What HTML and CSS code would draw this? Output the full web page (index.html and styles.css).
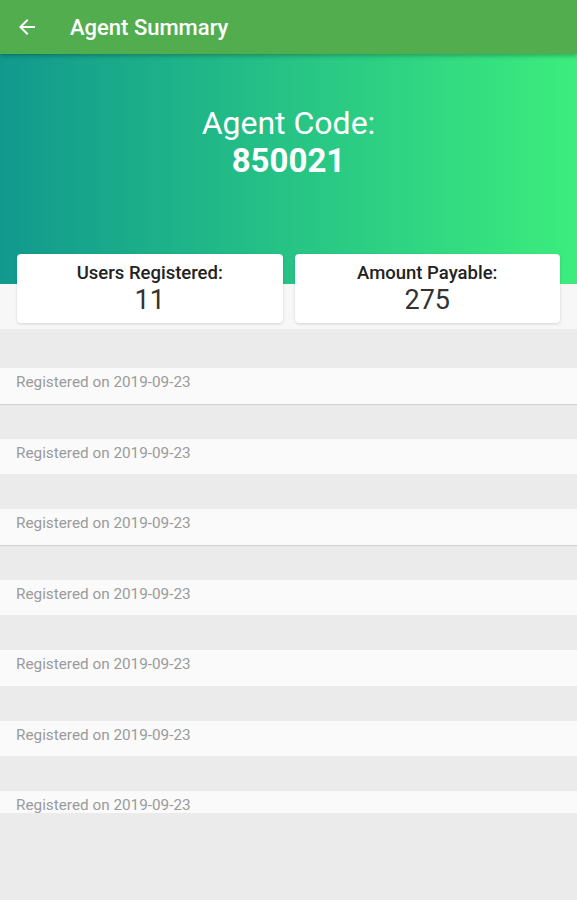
FILE: index.html
```html
<!DOCTYPE html>
<html lang="en">
<head>
    <meta charset="UTF-8">
    <title>Agent Summary</title>
    <meta name="viewport" content="width=device-width, initial-scale=1">
    <link rel="stylesheet" href="styles.css">
</head>
<body>
<header class="app-bar">
    <svg class="back-icon" viewBox="0 0 24 24" width="24" height="24">
        <path d="M20 11H7.83l5.59-5.59L12 4l-8 8 8 8 1.41-1.41L7.83 13H20v-2z" fill="#fff"/>
    </svg>
    <h1>Agent Summary</h1>
</header>

<section class="hero">
    <div class="code-label">Agent Code:</div>
    <div class="code-value">850021</div>
</section>

<section class="stats">
    <div class="stat-card">
        <div class="stat-title">Users Registered:</div>
        <div class="stat-value">11</div>
    </div>
    <div class="stat-card">
        <div class="stat-title">Amount Payable:</div>
        <div class="stat-value">275</div>
    </div>
</section>

<!-- registered users list -->
<div class="user-list">
    <div class="user-item"><div class="user-name"></div><div class="user-date">Registered on 2019-09-23</div></div>
    <div class="user-item"><div class="user-name"></div><div class="user-date">Registered on 2019-09-23</div></div>
    <div class="user-item"><div class="user-name"></div><div class="user-date">Registered on 2019-09-23</div></div>
    <div class="user-item"><div class="user-name"></div><div class="user-date">Registered on 2019-09-23</div></div>
    <div class="user-item"><div class="user-name"></div><div class="user-date">Registered on 2019-09-23</div></div>
    <div class="user-item"><div class="user-name"></div><div class="user-date">Registered on 2019-09-23</div></div>
    <div class="user-item"><div class="user-name"></div><div class="user-date">Registered on 2019-09-23</div></div>
</div>
</body>
</html>
```

FILE: styles.css
```css
body {
    margin: 0;
    font-family: Roboto, "Noto Sans", sans-serif;
    background: #ebebeb;
    min-height: 900px;
}

.app-bar {
    position: relative;
    z-index: 2;
    display: flex;
    align-items: center;
    height: 54px;
    padding: 0 15px;
    background: #52ad4f;
    box-shadow: 0 2px 4px rgba(0,0,0,0.25);
}
.back-icon {
    flex: none;
}
.app-bar h1 {
    margin: 0 0 0 31px;
    color: #fff;
    font-size: 22px;
    font-weight: 500;
}

.hero {
    height: 230px;
    padding-top: 50px;
    box-sizing: border-box;
    background: linear-gradient(to right, #11998e, #3ced7d);
    color: #fff;
    text-align: center;
}
.code-label {
    font-size: 32px;
    line-height: 38px;
}
.code-value {
    font-size: 33px;
    font-weight: 700;
    line-height: 38px;
}

.stats {
    display: grid;
    grid-template-columns: 1fr 1fr;
    gap: 12px;
    margin-top: -30px;
    padding: 0 17px 6px;
    background: linear-gradient(to bottom, transparent 30px, #f7f7f7 30px);
}
.stat-card {
    height: 69px;
    padding-top: 8px;
    box-sizing: border-box;
    background: #fff;
    border-radius: 4px;
    box-shadow: 0 1px 3px rgba(0,0,0,0.15);
    text-align: center;
}
.stat-title {
    font-size: 18.5px;
    font-weight: 500;
    color: #222;
    line-height: 22px;
}
.stat-value {
    font-size: 27px;
    color: #333;
    line-height: 33px;
}

.user-list {
    padding-top: 4px;
}
.user-item {
    height: 70.5px;
}
.user-name {
    height: 35px;
}
.user-date {
    height: 35.5px;
    padding: 5px 16px 0;
    box-sizing: border-box;
    background: #fafafa;
    color: #9a9a9a;
    font-size: 15.3px;
}
.user-item:nth-child(1) .user-date, .user-item:nth-child(3) .user-date {
    box-shadow: 0 1px 1px rgba(0,0,0,0.1);
}
.user-item:last-child .user-date {
    height: 22px;
}
```
